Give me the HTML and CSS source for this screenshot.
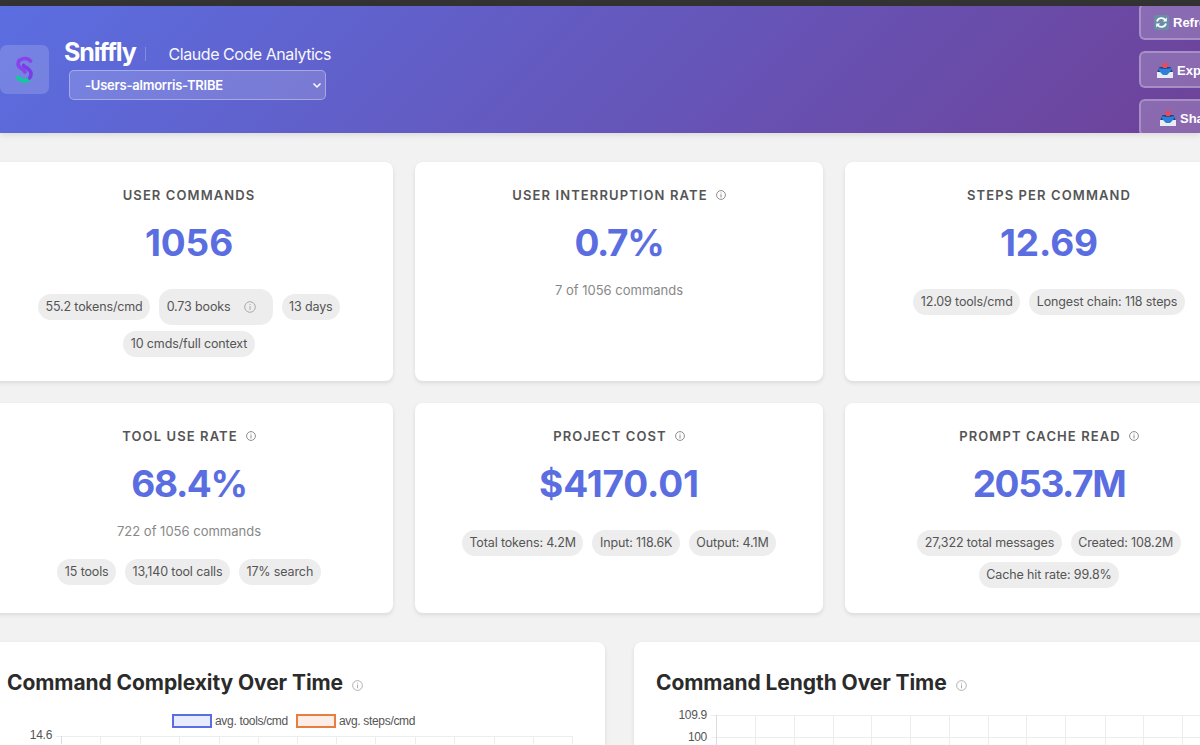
FILE: index.html
```html
<!DOCTYPE html>
<html lang="en">
<head>
    <meta charset="UTF-8">
    <meta name="viewport" content="width=device-width, initial-scale=1.0">
    <title>Sniffly - Claude Code Analytics</title>
    <link rel="stylesheet" href="styles.css">
</head>
<body>

    <!-- Shared icons -->
    <svg class="icon-defs">
        <symbol id="info" viewBox="0 0 12 12">
            <circle cx="6" cy="6" r="5.3" fill="none" stroke="currentColor"/>
            <path d="M6 5v4M6 3v1" fill="none" stroke="currentColor"/>
        </symbol>
        <symbol id="outbox" viewBox="0 0 18 18">
            <path d="M3.500 6h11l2.500 6H1z" fill="#27417f"/>
            <path d="M1 11h4l2 2h4l2-2h4v6H1z" fill="#e9edf3"/>
            <path d="M2 7c3 1 11 1 14 0l-2 4-3 3H7l-3-3z" fill="#2f80d8"/>
            <path d="M9 1l4 3.500h-2V7H7V4.500H5z" fill="#e64a5b"/>
        </symbol>
    </svg>

    <div class="topbar"></div>

    <header class="header">
        <div class="logo">
            <svg width="20" height="28" viewBox="0 0 20 28" fill="none" stroke-linecap="round">
                <path d="M3 21.500c2.500 4 8 4 11 2" stroke="#12c99b" stroke-width="4"/>
                <path d="M15.500 5C12 1 3 2 3 8c0 5 6 4 7 8" stroke="#8a42ea" stroke-width="3.600"/>
                <path d="M8.500 9.500c2 2.500 7.500 3 7.500 8.500 0 2-.5 3-1.500 4" stroke="#7a3ce6" stroke-width="3.600"/>
            </svg>
        </div>
        <div class="brand">
            <div class="brand-row">
                <h1>Sniffly</h1>
                <span class="tagline">Claude Code Analytics</span>
            </div>
            <div class="project-select">
                <span>-Users-almorris-TRIBE</span>
                <svg width="10" height="7" viewBox="0 0 10 7"><path d="M1.500 1.500L5 5l3.500-3.500" fill="none" stroke="#fff" stroke-width="1.500"/></svg>
            </div>
        </div>
        <div class="actions">
            <div class="btn btn-refresh">
                <svg width="17" height="17" viewBox="0 0 17 17">
                    <rect x="1" y="1" width="15" height="15" rx="2" fill="#688da6"/>
                    <path d="M4 7.500C5 3.500 10 3 12.500 6M13 9.500C12 13.500 7 14 4.500 11" fill="none" stroke="#fff" stroke-width="1.800"/>
                    <path d="M13.800 3.500v4h-4zM3.200 13.500v-4h4z" fill="#fff"/>
                </svg>
                <span>Refresh</span>
            </div>
            <div class="btn btn-export">
                <svg width="18" height="18"><use href="#outbox"/></svg>
                <span>Export</span>
            </div>
            <div class="btn btn-share">
                <svg width="18" height="18"><use href="#outbox"/></svg>
                <span>Share</span>
            </div>
        </div>
    </header>

    <main class="container">
        <!-- Stats -->
        <div class="stats">
            <div class="card">
                <div class="label">User Commands</div>
                <div class="value">1056</div>
                <div class="badges">
                    <span class="badge">55.2 tokens/cmd</span>
                    <span class="badge badge-tall">0.73 books <svg class="info"><use href="#info"/></svg></span>
                    <span class="badge">13 days</span>
                    <span class="badge">10 cmds/full context</span>
                </div>
            </div>
            <div class="card">
                <div class="label">User Interruption Rate <svg class="info"><use href="#info"/></svg></div>
                <div class="value value-tight">0.7%</div>
                <div class="subtext">7 of 1056 commands</div>
            </div>
            <div class="card">
                <div class="label">Steps Per Command</div>
                <div class="value">12.69</div>
                <div class="badges">
                    <span class="badge">12.09 tools/cmd</span>
                    <span class="badge">Longest chain: 118 steps</span>
                </div>
            </div>
            <div class="card">
                <div class="label">Tool Use Rate <svg class="info"><use href="#info"/></svg></div>
                <div class="value value-tight">68.4%</div>
                <div class="subtext">722 of 1056 commands</div>
                <div class="badges">
                    <span class="badge">15 tools</span>
                    <span class="badge">13,140 tool calls</span>
                    <span class="badge">17% search</span>
                </div>
            </div>
            <div class="card">
                <div class="label">Project Cost <svg class="info"><use href="#info"/></svg></div>
                <div class="value">$4170.01</div>
                <div class="badges">
                    <span class="badge">Total tokens: 4.2M</span>
                    <span class="badge">Input: 118.6K</span>
                    <span class="badge">Output: 4.1M</span>
                </div>
            </div>
            <div class="card">
                <div class="label">Prompt Cache Read <svg class="info"><use href="#info"/></svg></div>
                <div class="value value-tight">2053.7M</div>
                <div class="badges">
                    <span class="badge">27,322 total messages</span>
                    <span class="badge">Created: 108.2M</span>
                    <span class="badge">Cache hit rate: 99.8%</span>
                </div>
            </div>
        </div>

        <!-- Charts -->
        <div class="charts">
            <div class="chart-card">
                <h2>Command Complexity Over Time <svg class="info"><use href="#info"/></svg></h2>
                <div class="legend">
                    <i class="swatch swatch-tools"></i><span>avg. tools/cmd</span>
                    <i class="swatch swatch-steps"></i><span>avg. steps/cmd</span>
                </div>
                <div class="plot">
                    <div class="ticks"><span>14.6</span></div>
                    <svg class="grid" width="520" height="15">
                        <path d="M0 7.500H517M5.500 7V160M44.500 7V160M84.500 7V160M123.500 7V160M163.500 7V160M202.500 7V160M241.500 7V160M280.500 7V160M319.500 7V160M359.500 7V160M398.500 7V160M438.500 7V160M477.500 7V160M516.500 7V160"/>
                        <path class="axis" d="M5.500 7V160"/>
                    </svg>
                </div>
            </div>
            <div class="chart-card">
                <h2>Command Length Over Time <svg class="info"><use href="#info"/></svg></h2>
                <div class="plot plot-length">
                    <div class="ticks"><span>109.9</span><span>100</span></div>
                    <svg class="grid" width="520" height="36">
                        <path d="M0 6.500H520M0 28.500H520M5.500 6V160M44.500 6V160M83.500 6V160M122.500 6V160M160.500 6V160M199.500 6V160M238.500 6V160M277.500 6V160M315.500 6V160M354.500 6V160M394.500 6V160M432.500 6V160M471.500 6V160M510.500 6V160"/>
                        <path class="axis" d="M5.500 6V160"/>
                    </svg>
                </div>
            </div>
        </div>
    </main>

</body>
</html>
```
FILE: styles.css
```css
* {
    box-sizing: border-box;
}

body {
    font-family: Inter, "Liberation Sans", sans-serif;
    margin: 0;
    height: 745px;
    overflow: hidden;
    background-color: #f2f2f2;
    color: #555;
}

.icon-defs {
    display: none;
}

.topbar {
    height: 6px;
    background-color: #333;
}

.header {
    display: flex;
    align-items: flex-start;
    height: 127px;
    overflow: hidden;
    background: linear-gradient(135deg, #5b6ee1 0%, #6e4299 100%);
    box-shadow: 0 2px 6px rgba(0, 0, 0, 0.1);
    color: #fff;
}

.logo {
    display: flex;
    align-items: center;
    justify-content: center;
    width: 49px;
    height: 49px;
    margin-top: 39px;
    border-radius: 7px;
    background-color: rgba(255, 255, 255, 0.16);
}

.logo svg {
    margin-top: 1px;
}

.brand {
    margin: 30px 0 0 15px;
}

.brand-row {
    display: flex;
    align-items: center;
    height: 32px;
}

h1 {
    margin: 0;
    font-size: 25px;
    line-height: 32px;
    letter-spacing: -1.15px;
}

.tagline {
    display: flex;
    align-items: center;
    height: 14px;
    margin: 4px 0 0 9px;
    padding-left: 23px;
    border-left: 1px solid rgba(255, 255, 255, 0.25);
    font-size: 16px;
    letter-spacing: -0.45px;
    opacity: 0.95;
}

.project-select {
    display: flex;
    align-items: center;
    justify-content: space-between;
    width: 257px;
    height: 30px;
    margin: 2px 0 0 5px;
    padding: 0 3px 0 15px;
    border: 1px solid rgba(255, 255, 255, 0.35);
    border-radius: 5px;
    background-color: rgba(255, 255, 255, 0.16);
    font-size: 13px;
    font-weight: 600;
    letter-spacing: -0.22px;
}

.actions {
    display: flex;
    flex-direction: column;
    gap: 11px;
    width: 130px;
    margin: -3px -69px 0 auto;
}

.btn {
    display: flex;
    flex-shrink: 0;
    align-items: center;
    gap: 3px;
    height: 37px;
    padding-top: 1px;
    border: 2px solid rgba(255, 255, 255, 0.25);
    border-radius: 6px;
    background-color: rgba(255, 255, 255, 0.2);
    font-family: "Liberation Sans", Arial, sans-serif;
    font-size: 13px;
    font-weight: bold;
}

.btn-refresh {
    padding-left: 12px;
}

.btn-export {
    padding-left: 15px;
}

.btn-share {
    padding-left: 18px;
}

.container {
    width: 1268px;
    margin: 29px 0 0 -15px;
}

.stats {
    display: grid;
    grid-template-columns: repeat(3, 1fr);
    grid-template-rows: 219px 210px;
    gap: 22px;
}

.card,
.chart-card {
    border-radius: 8px;
    background-color: #fff;
    box-shadow: 0 2px 4px rgba(0, 0, 0, 0.1);
}

.card {
    padding: 23px 44px 0;
    text-align: center;
}

.info {
    flex: none;
    width: 11px;
    height: 11px;
    color: #aaa;
}

.label {
    display: flex;
    align-items: center;
    justify-content: center;
    height: 20px;
    font-size: 13px;
    font-weight: 600;
    letter-spacing: 1.1px;
    text-transform: uppercase;
}

.label .info {
    width: 10px;
    height: 10px;
    margin-left: 8px;
    color: #777;
}

.value {
    margin-top: 16px;
    font-size: 37px;
    font-weight: 700;
    line-height: 44px;
    letter-spacing: -0.1px;
    color: #5b6ee1;
}

.value-tight {
    letter-spacing: -1.4px;
}

.subtext {
    margin-top: 15px;
    font-size: 13px;
    line-height: 20px;
    color: #888;
}

.badges {
    display: flex;
    flex-wrap: wrap;
    align-items: center;
    justify-content: center;
    gap: 6px 9px;
    margin-top: 24px;
}

.subtext + .badges {
    margin-top: 18px;
}

.badge {
    height: 26px;
    padding: 0 7.5px;
    border-radius: 13px;
    background-color: #ededed;
    font-size: 12.5px;
    line-height: 25px;
    letter-spacing: -0.13px;
}

.badge-tall {
    display: flex;
    align-items: center;
    height: 36px;
    padding-right: 17px;
    line-height: 34px;
}

.badge-tall .info {
    width: 12px;
    height: 12px;
    margin-left: 13px;
}

.charts {
    display: grid;
    grid-template-columns: 620px 620px;
    gap: 29px;
    margin-top: 29px;
}

.chart-card {
    height: 103px;
    padding: 26px 22px 0;
    border-radius: 8px 8px 0 0;
}

h2 {
    display: flex;
    align-items: center;
    height: 28px;
    margin: 0;
    font-size: 21px;
    font-weight: 700;
    letter-spacing: -0.08px;
    color: #2b2b2b;
}

h2 .info {
    margin: 6px 0 0 9px;
}

.legend {
    display: flex;
    align-items: center;
    height: 16px;
    margin: 17px 0 0 165px;
    font-family: "Liberation Sans", Arial, sans-serif;
    font-size: 12px;
    letter-spacing: -0.32px;
}

.swatch {
    width: 40px;
    height: 14px;
    margin-right: 3px;
    border: 2px solid #5b6ee1;
    background-color: #e8ebfb;
}

.swatch-steps {
    margin-left: 8px;
    border-color: #e87d43;
    background-color: #fceee7;
}

.plot {
    display: flex;
    gap: 4px;
}

.ticks {
    display: flex;
    flex-direction: column;
    width: 45px;
    font-family: "Liberation Sans", Arial, sans-serif;
    font-size: 12px;
    line-height: 13px;
    letter-spacing: -0.3px;
    text-align: right;
}

.ticks span + span {
    margin-top: 9px;
}

.plot-length {
    margin-top: 13px;
}

.plot-length .ticks {
    width: 51px;
}

.grid {
    flex: none;
}

.grid path {
    fill: none;
    stroke: #ededed;
}

.grid .axis {
    stroke: #dcdcdc;
}
```
